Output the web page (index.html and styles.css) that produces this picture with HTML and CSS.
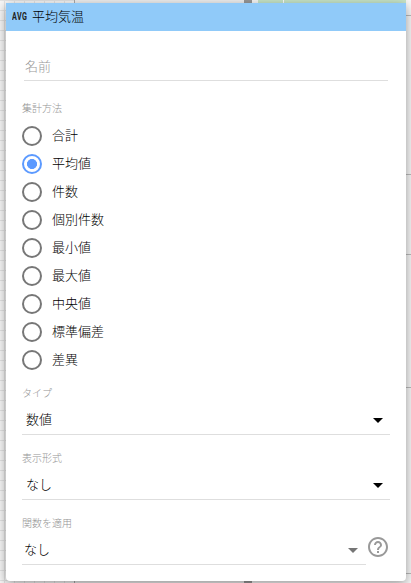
FILE: index.html
```
<!doctype html>
<html lang="ja">
<head>
    <meta charset="utf-8">
    <meta name="viewport" content="width=device-width, initial-scale=1">
    <title>平均気温</title>
    <link rel="stylesheet" href="styles.css">
</head>
<body>

<!-- キャンバスの背景 -->
<svg class="canvas" width="411" height="583" viewBox="0 0 411 583" aria-hidden="true">
    <defs>
        <pattern id="grid" width="10" height="10" patternUnits="userSpaceOnUse">
            <path d="M4.5 0V10M0 .5H10" stroke="#e4e4e4" fill="none"/>
        </pattern>
    </defs>
    <rect width="74" height="583" fill="url(#grid)"/>
    <path d="M74.5 0V583" stroke="#aaa"/>
    <path d="M75 0H244V583H75z" fill="#f0f0f0"/>
    <path d="M244 0H252V583H244z" fill="#999"/>
    <path d="M258 0H406V4H258z" fill="#c8e6c9"/>
    <path d="M283.5 0V4" stroke="#fff"/>
    <path d="M405 15.5H411M405 174.5H411M405 254.5H411M405 387.5H411M75 573.5H411" stroke="#bbb"/>
</svg>

<form class="dialog">
    <header class="dialog-header">
        <span class="dialog-badge">AVG</span>
        <h1 class="dialog-title">平均気温</h1>
    </header>

    <input class="name-input" type="text" placeholder="名前" aria-label="名前">

    <!-- 集計方法 -->
    <div class="label" id="method">集計方法</div>
    <div class="radio-group" role="radiogroup" aria-labelledby="method">
        <label class="radio"><input type="radio" name="method"><span>合計</span></label>
        <label class="radio"><input type="radio" name="method" checked><span>平均値</span></label>
        <label class="radio"><input type="radio" name="method"><span>件数</span></label>
        <label class="radio"><input type="radio" name="method"><span>個別件数</span></label>
        <label class="radio"><input type="radio" name="method"><span>最小値</span></label>
        <label class="radio"><input type="radio" name="method"><span>最大値</span></label>
        <label class="radio"><input type="radio" name="method"><span>中央値</span></label>
        <label class="radio"><input type="radio" name="method"><span>標準偏差</span></label>
        <label class="radio"><input type="radio" name="method"><span>差異</span></label>
    </div>

    <div class="field">
        <div class="label">タイプ</div>
        <div class="select">
            <span>数値</span>
            <svg class="arrow" width="10" height="5" viewBox="0 0 10 5"><path d="M0 0H10L5 5z"/></svg>
        </div>
    </div>

    <div class="field">
        <div class="label">表示形式</div>
        <div class="select">
            <span>なし</span>
            <svg class="arrow" width="10" height="5" viewBox="0 0 10 5"><path d="M0 0H10L5 5z"/></svg>
        </div>
    </div>

    <!-- 関数とヘルプ -->
    <div class="field">
        <div class="label">関数を適用</div>
        <div class="function-row">
            <div class="select select-function">
                <span>なし</span>
                <svg class="arrow" width="10" height="5" viewBox="0 0 10 5"><path d="M0 0H10L5 5z"/></svg>
            </div>
            <svg class="help" width="24" height="24" viewBox="0 0 24 24">
                <path d="M11 18h2v-2h-2v2zm1-16C6.48 2 2 6.48 2 12s4.48 10 10 10 10-4.48 10-10S17.52 2 12 2zm0 18c-4.41 0-8-3.59-8-8s3.59-8 8-8 8 3.59 8 8-3.59 8-8 8zm0-14c-2.21 0-4 1.79-4 4h2c0-1.1.9-2 2-2s2 .9 2 2c0 2-3 1.75-3 5h2c0-2.25 3-2.5 3-5 0-2.21-1.79-4-4-4z"/>
            </svg>
        </div>
    </div>
</form>

</body>
</html>
```
FILE: styles.css
```
*, *::before, *::after {
    box-sizing: border-box;
}

:root {
    --header-bg: #90caf9;
    --accent: #5c9aff;
    --line: #dedede;
    --muted: #999;
}

body {
    height: 583px;
    margin: 0;
    padding: 3px 5px 2px 6px;
    overflow: hidden;
    background: #f8f8f8;
    color: #000;
    font-family: "Noto Sans CJK JP", sans-serif;
    font-size: 13px;
    font-weight: 300;
    line-height: 20px;
}

/* ダイアログの下に敷く */
.canvas {
    position: absolute;
    top: 0;
    left: 0;
    z-index: -1;
}

.dialog {
    height: 578px;
    background: #fff;
    border-radius: 0 0 4px 4px;
    box-shadow: 0 3px 12px rgba(0, 0, 0, 0.4);
}

.dialog-header {
    display: flex;
    align-items: center;
    gap: 5px;
    height: 28px;
    padding-left: 6px;
    background: var(--header-bg);
}

.dialog-badge {
    width: 15px;
    color: #222;
    font: 700 10px/20px Roboto, sans-serif;
    letter-spacing: 0.6px;
    transform: scaleX(0.72);
    transform-origin: left;
}

.dialog-title {
    margin: 0 0 2px;
    font-size: 13px;
    font-weight: 300;
}

.name-input {
    display: block;
    width: 364px;
    height: 30px;
    margin: 20px 0 0 18px;
    padding: 0 1px;
    border: 0;
    border-bottom: 1px solid var(--line);
    outline: none;
    font: inherit;
}

.name-input::placeholder {
    color: var(--muted);
}

.label {
    height: 14px;
    margin-left: 16px;
    color: #949494;
    font-size: 10px;
    line-height: 14px;
}

#method {
    margin-top: 20px;
}

/* ラジオボタン */
.radio-group {
    margin: 7px 0 0 16px;
}

.radio {
    display: flex;
    align-items: center;
    gap: 10px;
    height: 28px;
}

.radio span,
.select span {
    margin-bottom: 2px;
}

.radio input {
    appearance: none;
    width: 20px;
    height: 20px;
    margin: 0;
    border: 2px solid #777;
    border-radius: 50%;
}

.radio input:checked {
    border-color: var(--accent);
    background: radial-gradient(circle, var(--accent) 4.7px, transparent 5.3px);
}

.field {
    height: 65px;
    padding-top: 12px;
}

.select {
    display: flex;
    align-items: center;
    justify-content: space-between;
    width: 368px;
    height: 30px;
    margin: 5px 0 0 16px;
    padding: 0 7px 0 4px;
    border-bottom: 1px solid var(--line);
}

.function-row {
    display: flex;
}

.select-function {
    width: 344px;
    padding: 0 8px 0 2px;
}

.arrow {
    margin-top: 2px;
}

.select-function .arrow {
    fill: #757575;
}

.help {
    margin-top: 5px;
    fill: #999;
}
```
